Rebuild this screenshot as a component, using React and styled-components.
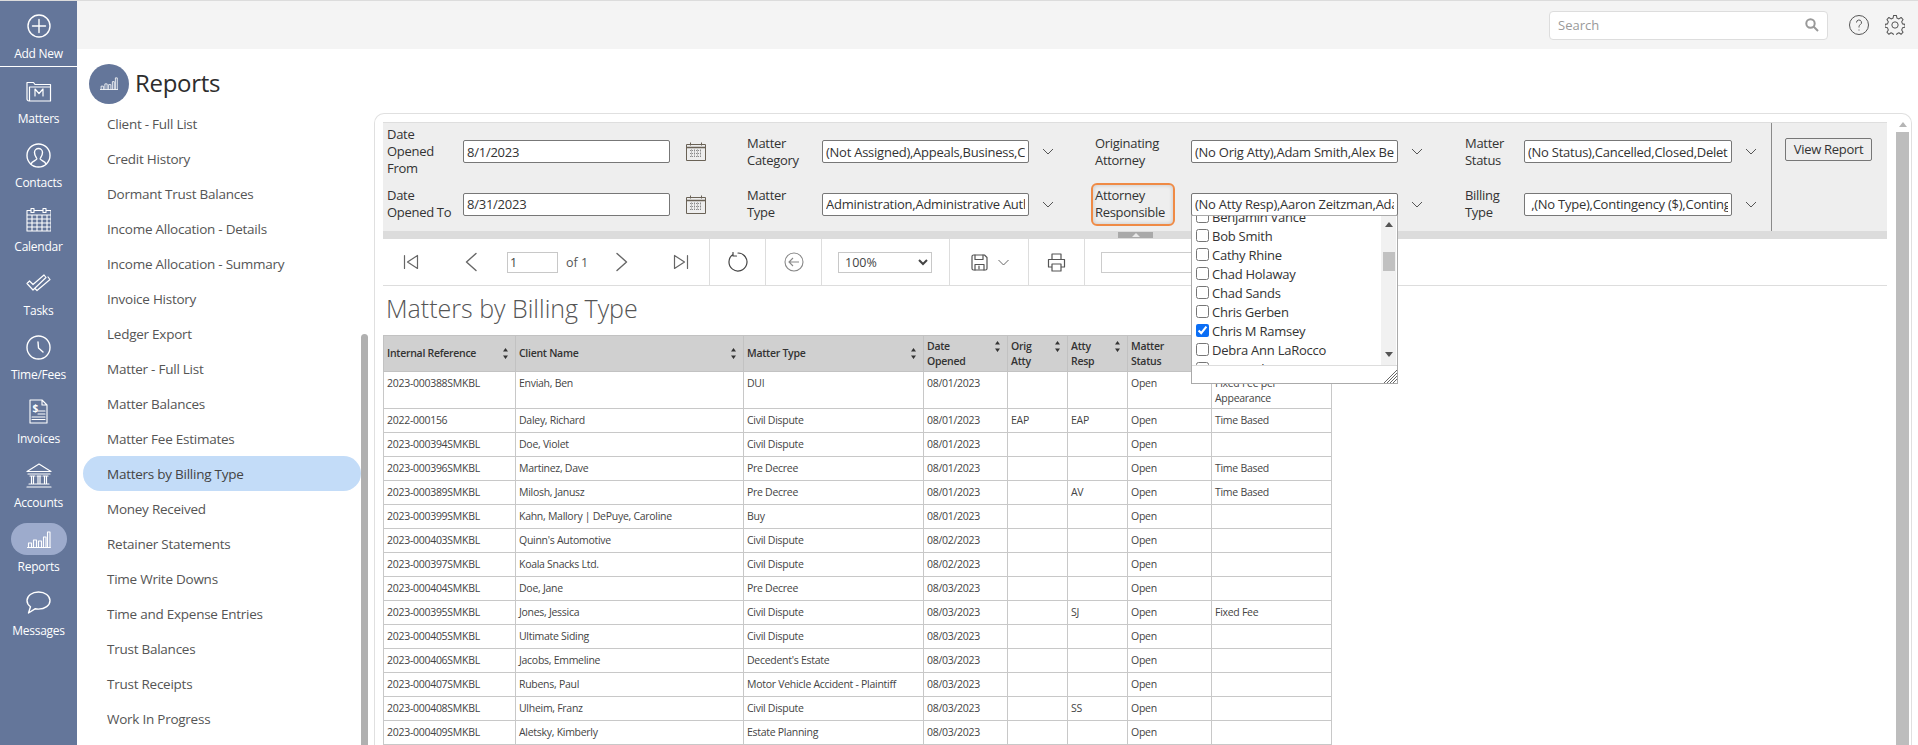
import React from 'react';
import styled, { createGlobalStyle } from 'styled-components';

const Global = createGlobalStyle`
  html, body { margin: 0; padding: 0; height: 100%; overflow: hidden; background: #fff; }
  body { font-family: "Open Sans", "Noto Sans", "Liberation Sans", sans-serif; color: #333; }
  * { box-sizing: border-box; }
`;

const Shell = styled.div`
  display: flex; width: 1918px; height: 745px; border-top: 1px solid #dcdcdc; overflow: hidden;
`;
const Sidebar = styled.nav`
  width: 77px; flex: none; background: #64769a; display: flex; flex-direction: column;
`;
const NavItem = styled.div`
  height: 64px; display: flex; flex-direction: column; align-items: center; padding-top: 8px;
  ${p => p.$add && 'height: 66px; padding-top: 9px; border-bottom: 1px solid #fff;'}
`;
const NavIcon = styled.div`
  width: 56px; height: 32px; border-radius: 16px; display: flex; align-items: center; justify-content: center;
  background: ${p => (p.$active ? '#9dabcc' : 'transparent')};
`;
const NavLabel = styled.div`
  margin-top: 3px; font-size: 12px; line-height: 18px; color: #fff; letter-spacing: -0.25px; white-space: nowrap;
`;
const Main = styled.div`
  flex: 1; min-width: 0; display: flex; flex-direction: column;
`;
const TopBar = styled.header`
  height: 48px; flex: none; background: #f4f4f4; display: flex; align-items: center; justify-content: flex-end;
  padding-right: 13px;
`;
const SearchBox = styled.div`
  width: 279px; height: 29px; background: #fff; border: 1px solid #ddd; border-radius: 4px;
  display: flex; align-items: center; justify-content: space-between; padding: 0 8px;
  font-size: 13px; color: #9a9a9a; margin-right: 21px;
`;
const TopIcon = styled.div`
  display: flex; margin-left: ${p => p.$ml || 0}px;
`;
const Body = styled.div`
  flex: 1; display: flex; min-height: 0;
`;
const LeftCol = styled.aside`
  width: 297px; flex: none; display: flex; flex-direction: column; min-height: 0;
`;
const Heading = styled.div`
  display: flex; align-items: center; gap: 7px; padding: 12px 0 0 12px; height: 57px; flex: none;
`;
const HeadingCircle = styled.div`
  width: 40px; height: 40px; border-radius: 50%; background: #64769a; display: flex; align-items: center; justify-content: center;
`;
const HeadingText = styled.h1`
  margin: -2px 0 0 -1px; font-size: 24px; font-weight: 400; color: #2d2d2d; letter-spacing: -0.3px;
`;
const ListArea = styled.div`
  flex: 1; display: flex; padding-left: 6px; min-height: 0; overflow: hidden;
`;
const ReportList = styled.ul`
  list-style: none; margin: 0; padding: 0; width: 278px;
`;
const ReportItem = styled.li`
  height: 35px; padding-left: 24px; display: flex; align-items: center; font-size: 13.5px; letter-spacing: -0.25px;
  color: #555; border-radius: 18px; white-space: nowrap;
  ${p => p.$active && 'background: #c3dcf8; color: #444;'}
`;
const ListTrack = styled.div`
  width: 7px; flex: none; display: flex; flex-direction: column; padding-top: 228px;
`;
const ListThumb = styled.div`
  flex: 1; background: #b0b0b0; border-radius: 4px 4px 0 0;
`;
const Panel = styled.section`
  flex: 1; min-width: 0; margin: 64px 6px 0 0; border: 1px solid #e0e0e0; border-bottom: 0; border-radius: 10px 10px 0 0;
  display: flex; padding: 8px 1px 0 8px; overflow: hidden;
`;
const Content = styled.div`
  width: 1504px; flex: none; position: relative; display: flex; flex-direction: column;
`;
const PanelScroll = styled.div`
  margin-left: 9px; width: 13px; flex: none; display: flex; flex-direction: column; align-items: center;
`;
const PanelThumb = styled.div`
  flex: 1; width: 13px; margin-top: 5px; background: #bdbdbd;
`;
const FilterBar = styled.div`
  height: 109px; flex: none; background: #eee; border-top: 1px solid #dedede; display: flex;
`;
const FilterGrid = styled.div`
  width: 1389px; flex: none; display: grid; padding: 3px 0 10px 4px; border-right: 1px solid #8a8a8a;
  grid-template-columns: 76px 207px 77px 75px 207px 66px 96px 207px 67px 59px 208px 39px;
  grid-template-rows: 51px 34px; row-gap: 10px; align-items: center;
`;
const FieldLabel = styled.div`
  font-size: 13px; line-height: 17px; color: #333; letter-spacing: -0.3px; white-space: nowrap;
  ${p => p.$focus && `
    justify-self: start; width: 84px; margin: -4.500px 0 -4.500px -4.500px; padding: 2.500px; border: 2px solid #ef8a45; border-radius: 6px;
    box-shadow: inset 0 0 4px rgba(0,0,0,.18);
  `}
`;
const TextField = styled.input`
  width: 100%; height: 23px; border: 1px solid #777; border-radius: 2px; background: #fff; padding: 0 3px;
  font: 13px "Open Sans", sans-serif; letter-spacing: -0.25px; color: #333; outline: none;
`;
const FieldIcon = styled.div`
  display: flex; padding-left: ${p => p.$pad}px;
`;
const ButtonArea = styled.div`
  flex: 1; padding: 14px 0 0 13px;
`;
const ViewButton = styled.button`
  width: 87px; height: 23px; padding: 0; background: #eee; border: 1px solid #777; border-radius: 2px;
  font: 13px "Open Sans", sans-serif; letter-spacing: -0.3px; color: #333;
`;
const Splitter = styled.div`
  height: 8px; flex: none; background: #dcdcdc; padding: 1px 0 0 735px;
`;
const SplitHandle = styled.div`
  width: 35px; height: 6px; background: #a9a9a9; display: flex; align-items: center; justify-content: center;
`;
const Toolbar = styled.div`
  height: 47px; flex: none; border-bottom: 1px solid #ddd; display: flex; align-items: stretch;
`;
const ToolGroup = styled.div`
  width: ${p => p.$w}px; flex: none; display: flex; align-items: center; padding-left: ${p => p.$pad || 0}px;
  ${p => p.$center && 'justify-content: center; padding-left: 0;'}
  ${p => !p.$last && 'border-right: 1px solid #ddd;'}
`;
const ToolIcon = styled.div`
  display: flex; margin-left: ${p => p.$ml || 0}px;
`;
const PageInput = styled.input`
  width: 51px; height: 21px; margin-left: ${p => p.$ml}px; border: 1px solid #c8c8c8; padding: 0 2px;
  font: 12.5px "Open Sans", sans-serif; color: #444; outline: none;
`;
const PageText = styled.span`
  margin-left: 8px; font-size: 12.5px; color: #555; white-space: nowrap;
`;
const ZoomSelect = styled.select`
  width: 94px; height: 21px; border: 1px solid #c8c8c8; background: #fff; font: 12.5px "Open Sans", sans-serif; color: #444;
  padding-left: 2px; outline: none;
`;
const FindInput = styled.input`
  width: 150px; height: 21px; border: 1px solid #ccc; outline: none;
`;
const ReportTitle = styled.h2`
  margin: 0; height: 51px; padding: 6px 0 0 3px; font-size: 25px; line-height: 32px; font-weight: 300; color: #555;
`;
const Table = styled.table`
  width: 948px; table-layout: fixed; border-collapse: collapse; font-size: 10.5px; line-height: 15px; color: #444;
  letter-spacing: -0.28px;
`;
const Th = styled.th`
  height: 36px; padding: 0 3px; background: #d0d0d0; border: 1px solid #c2c2c2; font-weight: 600; color: #333; text-align: left;
  vertical-align: middle;
`;
const ThInner = styled.div`
  display: flex; justify-content: space-between; align-items: flex-start; padding-right: 3px;
`;
const Td = styled.td`
  height: ${p => (p.$tall ? 37 : 24)}px; padding: 4px 3px 0; border: 1px solid #c8c8c8; vertical-align: top; overflow: hidden; white-space: ${p => (p.$wrap ? 'normal' : 'nowrap')};
`;
const Dropdown = styled.div`
  position: absolute; left: 808px; top: 93px; width: 207px; height: 169px; background: #fff; border: 1px solid #aaa; z-index: 5;
  display: flex; flex-direction: column;
`;
const DropBody = styled.div`
  height: 150px; flex: none; display: flex; overflow: hidden; border-bottom: 1px solid #ddd;
`;
const DropList = styled.div`
  flex: 1; margin-top: -9px; padding-left: 4px;
`;
const DropRow = styled.label`
  height: 19px; display: flex; align-items: center; gap: 3px; font-size: 13px; letter-spacing: -0.25px; color: #333; white-space: nowrap;
`;
const DropCheck = styled.input`
  width: 13px; height: 13px; margin: 0; accent-color: #0b6ef5;
`;
const DropScroll = styled.div`
  width: 15px; flex: none; background: #f1f1f1; display: flex; flex-direction: column; align-items: center; padding-top: 6px; margin-right: 1px;
`;
const DropThumb = styled.div`
  width: 12px; height: 19px; margin-top: 25px; background: #c1c1c1;
`;
const DropArrow = styled.div`
  display: flex; margin-top: ${p => p.$mt}px;
`;
const DropFooter = styled.div`
  flex: 1; display: flex; justify-content: flex-end; align-items: flex-end;
`;

const S = { fill: 'none', stroke: '#fff', strokeWidth: 1.4, strokeLinecap: 'round', strokeLinejoin: 'round' };
const G = { fill: 'none', stroke: '#666', strokeWidth: 1.2, strokeLinecap: 'round', strokeLinejoin: 'round' };

const Bars = ({ w = 24, h = 17 }) => (
  <svg width={w} height={h} viewBox="0 0 24 17" {...S} strokeWidth="1.1">
    <path d="M0.5 16.5h23M1.5 16v-4h3v4M6.5 16V9h3v7M11.5 16v-6h3v6M16.5 16V6h2.500v10M20.5 16V1h2.500v15" />
  </svg>
);

const icons = {
  add: <svg width="24" height="24" viewBox="0 0 24 24" {...S}><circle cx="12" cy="12" r="11" /><path d="M12 5.500v13M5.500 12h13" /></svg>,
  matters: <svg width="26" height="22" viewBox="0 0 26 22" {...S} strokeWidth="1.2"><path d="M1 19V2.500h6.500l1.500 2h15.500v16.500H3a2 2 0 0 1-2-2zM3.500 20.500V7h21" /><path d="M9 16v-7l4 4.500 4-4.500v7" /></svg>,
  contacts: <svg width="25" height="25" viewBox="0 0 25 25" {...S}><circle cx="12.500" cy="12.500" r="11.500" /><path d="M5 21c1-3 5-3.500 5.800-5 .5-1-2.300-2.800-2.300-6.500a4 4 0 0 1 8 0c0 3.700-2.800 5.500-2.300 6.500.8 1.500 4.800 2 5.800 5" /></svg>,
  calendar: <svg width="25" height="25" viewBox="0 0 25 25" {...S} strokeWidth="1.1"><path d="M1 3.500h24V24H1zM1 8h24M1 12h24M1 16h24M1 20h24M6 8v16M11 8v16M16 8v16M21 8v16" /><path d="M5 1.500h3v4H5zM17 1.500h3v4h-3z" fill="#64769a" /></svg>,
  tasks: <svg width="25" height="18" viewBox="0 0 25 18" {...S} strokeWidth="1.2"><path d="M1 9.500l2.500-2.500 3.500 3.500L18 1l2 2.500L7 16zM9 14.500L11 16.500 24 5.500 22 3" /></svg>,
  clock: <svg width="25" height="25" viewBox="0 0 25 25" {...S}><circle cx="12.500" cy="12.500" r="11.500" /><path d="M12 7l.5 6 4.500 4" /></svg>,
  invoices: <svg width="19" height="25" viewBox="0 0 19 25" {...S} strokeWidth="1.1"><path d="M1 1h12l5 5v18H1zM13 1v5h5" /><path d="M9 12h7M9 15h7M3 18h13M3 20.500h13" /><text x="3.500" y="13" fill="#fff" stroke="none" fontSize="10" fontWeight="700" fontFamily="Open Sans">$</text></svg>,
  accounts: <svg width="26" height="25" viewBox="0 0 26 25" {...S} strokeWidth="1.2"><path d="M1 8.500L13 1l12 7.500zM2 11h22M4 13h5M5.500 13v7M7.500 13v7M11 13h4M12 13v7M14 13v7M17 13h5M18.500 13v7M20.500 13v7M3 21h20M1 24h24" /></svg>,
  reports: <Bars />,
  messages: <svg width="25" height="24" viewBox="0 0 25 24" {...S}><path d="M12.500 1C6 1 1 4.800 1 9.500c0 2.600 1.500 4.800 3.500 6.300L2.500 22l6.500-4.200c1.100.2 2.300.3 3.500.3 6.500 0 11.500-3.800 11.500-8.600S19 1 12.500 1z" /></svg>,
};

const nav = [
  ['matters', 'Matters'], ['contacts', 'Contacts'], ['calendar', 'Calendar'], ['tasks', 'Tasks'], ['clock', 'Time/Fees'],
  ['invoices', 'Invoices'], ['accounts', 'Accounts'], ['reports', 'Reports'], ['messages', 'Messages'],
];
const reports = ['Client - Full List', 'Credit History', 'Dormant Trust Balances', 'Income Allocation - Details', 'Income Allocation - Summary', 'Invoice History', 'Ledger Export', 'Matter - Full List', 'Matter Balances', 'Matter Fee Estimates', 'Matters by Billing Type', 'Money Received', 'Retainer Statements', 'Time Write Downs', 'Time and Expense Entries', 'Trust Balances', 'Trust Receipts', 'Work In Progress'];

const Chevron = () => (
  <svg width="12" height="7" viewBox="0 0 12 7" fill="none" stroke="#555" strokeWidth="1"><path d="M1 1l5 5 5-5" /></svg>
);
const CalendarIcon = () => (
  <svg width="20" height="19" viewBox="0 0 20 19" fill="none" stroke="#6a6256" strokeWidth="1">
    <path d="M.5 2.500h19v16H.5z" /><path d="M.5 5.500h19" strokeWidth="1.600" /><path d="M4.500 .5v3M15.500 .5v3" />
    <path d="M4 8.500h12M4 11.500h12M4 14.500h12M5.500 7.500v8M8.500 7.500v8M11.500 7.500v8M14.500 7.500v8" stroke="#8a8a8a" strokeDasharray="1 1" />
  </svg>
);
const SortIcon = () => (
  <svg width="7" height="15" viewBox="0 0 7 15" fill="#333"><path d="M3.500 2L6 5.500H1zM3.500 13L1 9.500h5z" /></svg>
);

const filters = [
  [<>Date<br />Opened<br />From</>, '8/1/2023', 'cal', <>Matter<br />Category</>, '(Not Assigned),Appeals,Business,Civil Dispute', <>Originating<br />Attorney</>, '(No Orig Atty),Adam Smith,Alex Bell,Amy', <>Matter<br />Status</>, '(No Status),Cancelled,Closed,Deleted,Open'],
  [<>Date<br />Opened To</>, '8/31/2023', 'cal', <>Matter<br />Type</>, 'Administration,Administrative Authority', <>Attorney<br />Responsible</>, '(No Atty Resp),Aaron Zeitzman,Adam Smith', <>Billing<br />Type</>, ' ,(No Type),Contingency ($),Contingency (%)'],
];

const cols = [132, 228, 180, 84, 60, 60, 84, 120];
const heads = ['Internal Reference', 'Client Name', 'Matter Type', <>Date<br />Opened</>, <>Orig<br />Atty</>, <>Atty<br />Resp</>, <>Matter<br />Status</>, <>Billing<br />Type</>];
const rows = [
  ['2023-000388SMKBL', 'Enviah, Ben', 'DUI', '08/01/2023', '', '', 'Open', 'Fixed Fee per Appearance'],
  ['2022-000156', 'Daley, Richard', 'Civil Dispute', '08/01/2023', 'EAP', 'EAP', 'Open', 'Time Based'],
  ['2023-000394SMKBL', 'Doe, Violet', 'Civil Dispute', '08/01/2023', '', '', 'Open', ''],
  ['2023-000396SMKBL', 'Martinez, Dave', 'Pre Decree', '08/01/2023', '', '', 'Open', 'Time Based'],
  ['2023-000389SMKBL', 'Milosh, Janusz', 'Pre Decree', '08/01/2023', '', 'AV', 'Open', 'Time Based'],
  ['2023-000399SMKBL', 'Kahn, Mallory | DePuye, Caroline', 'Buy', '08/01/2023', '', '', 'Open', ''],
  ['2023-000403SMKBL', "Quinn's Automotive", 'Civil Dispute', '08/02/2023', '', '', 'Open', ''],
  ['2023-000397SMKBL', 'Koala Snacks Ltd.', 'Civil Dispute', '08/02/2023', '', '', 'Open', ''],
  ['2023-000404SMKBL', 'Doe, Jane', 'Pre Decree', '08/03/2023', '', '', 'Open', ''],
  ['2023-000395SMKBL', 'Jones, Jessica', 'Civil Dispute', '08/03/2023', '', 'SJ', 'Open', 'Fixed Fee'],
  ['2023-000405SMKBL', 'Ultimate Siding', 'Civil Dispute', '08/03/2023', '', '', 'Open', ''],
  ['2023-000406SMKBL', 'Jacobs, Emmeline', "Decedent's Estate", '08/03/2023', '', '', 'Open', ''],
  ['2023-000407SMKBL', 'Rubens, Paul', 'Motor Vehicle Accident - Plaintiff', '08/03/2023', '', '', 'Open', ''],
  ['2023-000408SMKBL', 'Ulheim, Franz', 'Civil Dispute', '08/03/2023', '', 'SS', 'Open', ''],
  ['2023-000409SMKBL', 'Aletsky, Kimberly', 'Estate Planning', '08/03/2023', '', '', 'Open', ''],
];
const people = [['Benjamin Vance'], ['Bob Smith'], ['Cathy Rhine'], ['Chad Holaway'], ['Chad Sands'], ['Chris Gerben'], ['Chris M Ramsey', true], ['Debra Ann LaRocco'], ['Dean Baker']];

export default function App() {
  return (
    <>
      <Global />
      <Shell>
        <Sidebar>
          <NavItem $add>
            <NavIcon>{icons.add}</NavIcon>
            <NavLabel>Add New</NavLabel>
          </NavItem>
          {nav.map(([k, label]) => (
            <NavItem key={k}>
              <NavIcon $active={k === 'reports'}>{icons[k]}</NavIcon>
              <NavLabel>{label}</NavLabel>
            </NavItem>
          ))}
        </Sidebar>
        <Main>
          <TopBar>
            <SearchBox>
              Search
              <svg width="14" height="14" viewBox="0 0 14 14" fill="none" stroke="#999" strokeWidth="2"><circle cx="5.500" cy="5.500" r="4.200" /><path d="M8.500 8.500L13 13" /></svg>
            </SearchBox>
            <TopIcon>
              <svg width="20" height="20" viewBox="0 0 20 20" fill="none" stroke="#555" strokeWidth="1"><circle cx="10" cy="10" r="9.500" /><path d="M7.500 7.500a2.500 2.500 0 1 1 3.700 2.200c-.8.500-1.200 1-1.200 2v.8" /><path d="M10 14.500v1" /></svg>
            </TopIcon>
            <TopIcon $ml={16}>
              <svg width="20" height="20" viewBox="0 0 24 24" fill="none" stroke="#555" strokeWidth="1.200" strokeLinejoin="round"><circle cx="12" cy="12" r="3.800" /><path d="M10.300 1.500h3.400l.6 3 2.400 1 2.600-1.700 2.400 2.400-1.700 2.600 1 2.400 3 .6v3.400l-3 .6-1 2.400 1.700 2.600-2.400 2.400-2.600-1.700-2.400 1-.6 3h-3.400l-.6-3-2.400-1-2.600 1.700-2.400-2.400 1.700-2.600-1-2.400-3-.6v-3.400l3-.6 1-2.400-1.700-2.600 2.400-2.400 2.600 1.700 2.400-1z" transform="translate(0 -1) scale(1 1.04)" /></svg>
            </TopIcon>
          </TopBar>
          <Body>
            <LeftCol>
              <Heading>
                <HeadingCircle><Bars w={18} h={13} /></HeadingCircle>
                <HeadingText>Reports</HeadingText>
              </Heading>
              <ListArea>
                <ReportList>
                  {reports.map(r => <ReportItem key={r} $active={r === 'Matters by Billing Type'}>{r}</ReportItem>)}
                </ReportList>
                <ListTrack><ListThumb /></ListTrack>
              </ListArea>
            </LeftCol>
            <Panel>
              <Content>
                <FilterBar>
                  <FilterGrid>
                    {filters.map((f, i) => (
                      <React.Fragment key={i}>
                        <FieldLabel>{f[0]}</FieldLabel>
                        <TextField readOnly value={f[1]} />
                        <FieldIcon $pad={16}><CalendarIcon /></FieldIcon>
                        <FieldLabel>{f[3]}</FieldLabel>
                        <TextField readOnly value={f[4]} />
                        <FieldIcon $pad={13}><Chevron /></FieldIcon>
                        <FieldLabel $focus={i === 1}>{f[5]}</FieldLabel>
                        <TextField readOnly value={f[6]} />
                        <FieldIcon $pad={13}><Chevron /></FieldIcon>
                        <FieldLabel>{f[7]}</FieldLabel>
                        <TextField readOnly value={f[8]} />
                        <FieldIcon $pad={13}><Chevron /></FieldIcon>
                      </React.Fragment>
                    ))}
                  </FilterGrid>
                  <ButtonArea><ViewButton>View Report</ViewButton></ButtonArea>
                </FilterBar>
                <Splitter>
                  <SplitHandle>
                    <svg width="8" height="4" viewBox="0 0 8 4" fill="#e8e8e8"><path d="M4 0l4 4H0z" /></svg>
                  </SplitHandle>
                </Splitter>
                <Toolbar>
                  <ToolGroup $w={327} $pad={20}>
                    <ToolIcon><svg width="16" height="16" viewBox="0 0 16 16" {...G}><path d="M1.500 1.500v13M14.500 1.500v13L4.500 8z" /></svg></ToolIcon>
                    <ToolIcon $ml={46}><svg width="12" height="20" viewBox="0 0 12 20" {...G} strokeWidth="1.400"><path d="M11 1.500L1.500 10l9.500 8.500" /></svg></ToolIcon>
                    <PageInput $ml={30} readOnly value="1" />
                    <PageText>of 1</PageText>
                    <ToolIcon $ml={28}><svg width="12" height="20" viewBox="0 0 12 20" {...G} strokeWidth="1.400"><path d="M1 1.500L10.500 10 1 18.500" /></svg></ToolIcon>
                    <ToolIcon $ml={45}><svg width="16" height="16" viewBox="0 0 16 16" {...G}><path d="M14.500 1.500v13M1.500 1.500v13l10-6.500z" /></svg></ToolIcon>
                  </ToolGroup>
                  <ToolGroup $w={56} $center>
                    <svg width="20" height="20" viewBox="0 0 20 20" {...G} stroke="#444"><path d="M5 2.500a9 9 0 1 0 5-1.500M5 0.500v3.500h3.500" /></svg>
                  </ToolGroup>
                  <ToolGroup $w={56} $center>
                    <svg width="20" height="20" viewBox="0 0 20 20" fill="none" stroke="#888" strokeWidth="1.100"><circle cx="10" cy="10" r="9" /><path d="M15 10H5M9 6l-4 4 4 4" /></svg>
                  </ToolGroup>
                  <ToolGroup $w={128} $pad={16}>
                    <ZoomSelect defaultValue="100%"><option>100%</option><option>75%</option></ZoomSelect>
                  </ToolGroup>
                  <ToolGroup $w={79} $pad={21}>
                    <svg width="17" height="17" viewBox="0 0 17 17" {...G} stroke="#555"><path d="M1 2.500a1.500 1.500 0 0 1 1.500-1.500h11l2.500 2.500v11a1.500 1.500 0 0 1-1.500 1.500h-12A1.500 1.500 0 0 1 1 14.500z" /><path d="M4 1v4.500h8V1M4 16v-5.500h9V16M8 12v3" /></svg>
                    <ToolIcon $ml={10}><svg width="11" height="7" viewBox="0 0 11 7" fill="none" stroke="#666"><path d="M.5 1l5 5 5-5" /></svg></ToolIcon>
                  </ToolGroup>
                  <ToolGroup $w={56} $center>
                    <svg width="19" height="19" viewBox="0 0 19 19" {...G} stroke="#555"><path d="M5 6V1h9v5M4.500 14H1.500V6.500h16V14h-3M5 11h9v7H5z" /></svg>
                  </ToolGroup>
                  <ToolGroup $last $pad={16} $w={200}><FindInput readOnly /></ToolGroup>
                </Toolbar>
                <ReportTitle>Matters by Billing Type</ReportTitle>
                <Table>
                  <colgroup>{cols.map((c, i) => <col key={i} width={c} />)}</colgroup>
                  <thead>
                    <tr>{heads.map((h, i) => <Th key={i}><ThInner><span>{h}</span><SortIcon /></ThInner></Th>)}</tr>
                  </thead>
                  <tbody>
                    {rows.map((r, i) => (
                      <tr key={i}>{r.map((c, j) => <Td key={j} $tall={i === 0} $wrap={i === 0}>{c}</Td>)}</tr>
                    ))}
                  </tbody>
                </Table>
                <Dropdown>
                  <DropBody>
                    <DropList>
                      {people.map(([n, c]) => (
                        <DropRow key={n}><DropCheck type="checkbox" defaultChecked={!!c} />{n}</DropRow>
                      ))}
                    </DropList>
                    <DropScroll>
                      <svg width="8" height="5" viewBox="0 0 8 5" fill="#555"><path d="M4 0l4 5H0z" /></svg>
                      <DropThumb />
                      <DropArrow $mt={81}><svg width="8" height="5" viewBox="0 0 8 5" fill="#555"><path d="M4 5L0 0h8z" /></svg></DropArrow>
                    </DropScroll>
                  </DropBody>
                  <DropFooter>
                    <svg width="14" height="14" viewBox="0 0 14 14" stroke="#666" strokeWidth="1"><path d="M14 1L1 14M14 4L4 14M14 7L7 14M14 10L10 14" /></svg>
                  </DropFooter>
                </Dropdown>
              </Content>
              <PanelScroll>
                <svg width="8" height="5" viewBox="0 0 8 5" fill="#b5b5b5"><path d="M4 0l4 5H0z" /></svg>
                <PanelThumb />
              </PanelScroll>
            </Panel>
          </Body>
        </Main>
      </Shell>
    </>
  );
}
